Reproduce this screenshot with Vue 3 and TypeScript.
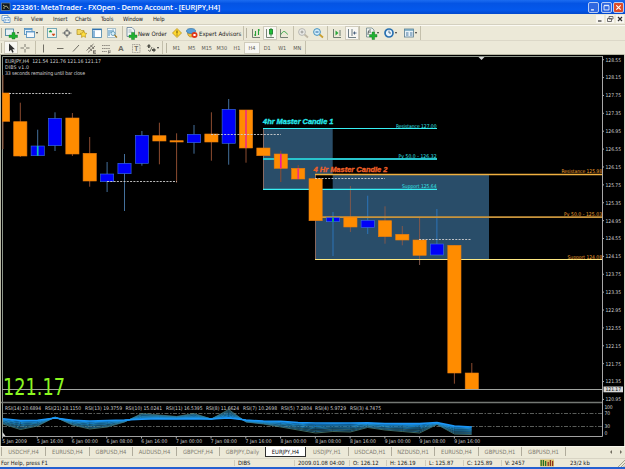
<script setup lang="ts">
interface Tool {
  icon?: string
  w: number
  label?: string
  arrow?: boolean
  on?: boolean
  kind?: 'sep' | 'grip'
}

const menu = [
  { text: 'File', w: 17 },
  { text: 'View', w: 22 },
  { text: 'Insert', w: 22 },
  { text: 'Charts', w: 26 },
  { text: 'Tools', w: 22 },
  { text: 'Window', w: 30 },
  { text: 'Help', w: 20 },
]

const mainTools: Tool[] = [
  { kind: 'grip', w: 4 },
  { icon: 'newchart', w: 19, arrow: true },
  { icon: 'profiles', w: 20, arrow: true },
  { kind: 'sep', w: 2 },
  { icon: 'market', w: 15 },
  { icon: 'navigate', w: 15 },
  { icon: 'folder', w: 15 },
  { icon: 'terminal', w: 15 },
  { icon: 'tester', w: 17 },
  { kind: 'sep', w: 2 },
  { icon: 'order', w: 46, label: 'New Order' },
  { icon: 'warn', w: 15 },
  { icon: 'expert', w: 58, label: 'Expert Advisors' },
  { kind: 'sep', w: 2 },
  { kind: 'grip', w: 4 },
  { icon: 'bars', w: 14 },
  { icon: 'candles', w: 14, on: true },
  { icon: 'line', w: 16 },
  { kind: 'sep', w: 3 },
  { icon: 'zoomin', w: 15 },
  { icon: 'zoomout', w: 16 },
  { kind: 'sep', w: 3 },
  { icon: 'scroll', w: 15 },
  { icon: 'shift', w: 14, on: true },
  { kind: 'sep', w: 5 },
  { icon: 'indicator', w: 18, arrow: true },
  { icon: 'clock', w: 20, arrow: true },
  { icon: 'template', w: 18, arrow: true },
  { kind: 'sep', w: 2 },
]

const lineTools: Tool[] = [
  { kind: 'grip', w: 4 },
  { icon: 'cursor', w: 14, on: true },
  { icon: 'cross', w: 17 },
  { kind: 'sep', w: 2 },
  { icon: 'vline', w: 16 },
  { icon: 'hline', w: 16 },
  { icon: 'trend', w: 15 },
  { icon: 'channel', w: 15 },
  { icon: 'fibo', w: 15 },
  { icon: 'texta', w: 15 },
  { icon: 'textt', w: 15 },
  { icon: 'arrows', w: 18, arrow: true },
  { kind: 'sep', w: 3 },
  { kind: 'grip', w: 4 },
]

const periods = ['M1', 'M5', 'M15', 'M30', 'H1', 'H4', 'D1', 'W1', 'MN']

const tabs = [
  { text: 'USDCHF,H4', w: 44 },
  { text: 'EURUSD,H4', w: 44 },
  { text: 'GBPUSD,H4', w: 43 },
  { text: 'AUDUSD,H4', w: 44 },
  { text: 'GBPCHF,H4', w: 43 },
  { text: 'GBPJPY,Daily', w: 46 },
  { text: 'EURJPY,H4', w: 41, active: true },
  { text: 'USDJPY,H1', w: 42 },
  { text: 'USDCAD,H1', w: 43 },
  { text: 'NZDUSD,H1', w: 43 },
  { text: 'EURUSD,H4', w: 44 },
  { text: 'GBPUSD,H1', w: 43 },
  { text: 'GBPUSD,H1', w: 44 },
]

const status = [
  { text: 'For Help, press F1', w: 234 },
  { text: 'DIBS', w: 60 },
  { text: '2009.01.08 04:00', w: 55 },
  { text: 'O: 126.12', w: 37 },
  { text: 'H: 126.19', w: 39 },
  { text: 'L: 125.87', w: 38 },
  { text: 'C: 125.89', w: 38 },
  { text: 'V: 2457', w: 36 },
]

// [center x, wick top, body top, body bottom, wick bottom, up?, stripe]
type Candle = [number, number, number, number, number, boolean, string?]
const candles: Candle[] = [
  [3, 75, 93, 121.3, 149, false],
  [20.3, 102.7, 121.7, 156, 157, false],
  [37.7, 129.7, 146, 155.7, 155.7, true, '#10c8b0'],
  [55, 112.3, 118.3, 145.7, 151, true],
  [72.4, 113, 118, 154, 156, false],
  [89.7, 137, 153.3, 181, 186.7, false],
  [107.1, 162, 174, 181.7, 192, true],
  [124.5, 154, 163.3, 173.7, 211, true],
  [141.9, 131, 135.3, 163.3, 165.7, true],
  [159.4, 122.7, 135.7, 141, 164.3, false],
  [176.6, 133.3, 140.7, 142, 182.7, false],
  [194, 125, 134.3, 142.7, 153.7, true],
  [211.4, 112.3, 134, 142, 160.7, false],
  [228.7, 99, 109.3, 143.3, 164.7, true],
  [246, 110, 110, 148, 162.7, false, '#f0307c'],
  [263.4, 148, 148, 155.7, 155.7, false],
  [280.8, 150.7, 154, 168.3, 182, false, '#f0189c'],
  [298.2, 165, 168.3, 179, 179, false, '#f0307c'],
  [315.6, 178.7, 178.7, 220.7, 220.7, false],
  [333, 212, 217.7, 221.7, 256, true, '#10c840'],
  [350.4, 186, 217, 227, 232, false],
  [367.7, 195.7, 220.3, 227.5, 234, true],
  [385, 206.3, 220.7, 236.7, 243.7, false],
  [402.3, 226, 234.3, 240, 245.3, false],
  [419.6, 217, 240, 255.3, 265, false],
  [436.9, 209, 244, 255, 255, true],
  [454.4, 245.3, 245.3, 373, 383.7, false],
  [471.8, 363, 373, 389.3, 389.3, false],
]

const prices = Array.from({ length: 20 }, (_, i) => ({
  text: (128.55 - i * 0.4).toFixed(2),
  y: 59.7 + i * 17.88,
}))

const times = [
  '5 Jan 2009', '5 Jan 16:00', '6 Jan 00:00', '6 Jan 08:00', '6 Jan 16:00',
  '7 Jan 00:00', '7 Jan 08:00', '7 Jan 16:00', '8 Jan 00:00', '8 Jan 08:00',
  '8 Jan 16:00', '9 Jan 00:00', '9 Jan 08:00', '9 Jan 16:00',
]

const rsiText = [
  { x: 5, w: 36, text: 'RSI(14) 20.6894' },
  { x: 45, w: 36, text: 'RSI(21) 28.1150' },
  { x: 85, w: 37, text: 'RSI(13) 19.3759' },
  { x: 125.5, w: 36.5, text: 'RSI(10) 15.0241' },
  { x: 166, w: 36.5, text: 'RSI(11) 16.5395' },
  { x: 206, w: 33, text: 'RSI(8) 11.6624' },
  { x: 243, w: 34, text: 'RSI(7) 10.2698' },
  { x: 281, w: 31, text: 'RSI(5) 7.2804' },
  { x: 315, w: 31, text: 'RSI(4) 5.9729' },
  { x: 350, w: 31, text: 'RSI(3) 4.7475' },
]

// slowest and fastest oscillator paths, the others lie between them
const slow = [
  418.5, 420, 420, 418, 420, 420.5, 420, 420, 419.5, 419, 419, 419, 419, 418.5,
  420, 421, 421, 422, 422.5, 422.5, 422.5, 422.5, 423, 423, 423, 422.5, 425.5, 426.5,
]
const fast = [
  424, 429.5, 426, 417, 425, 429, 427, 422, 413.5, 415, 416.5, 413.5, 419, 409.5,
  422, 424, 427, 430, 433, 431.5, 432, 427.5, 430, 431.5, 433, 424.5, 434, 434.5,
]
const shades: [number, string, number][] = [
  [1, '#5c9484', 0.7],
  [0.88, '#206890', 0.9],
  [0.75, '#48a0b8', 0.6],
  [0.62, '#1870a8', 0.9],
  [0.5, '#30a8d8', 0.7],
  [0.38, '#1478c0', 1],
  [0.27, '#28a8e8', 0.8],
  [0.16, '#1480d8', 1.1],
  [0.05, '#1c98f8', 1.5],
]
const rsiLines = shades.map(([k, color, width]) => ({
  color,
  width,
  points: slow
    .map((s, i) => `${(3 + i * 17.36).toFixed(1)},${(s + (fast[i] - s) * k).toFixed(1)}`)
    .join(' '),
}))
</script>

<template>
  <div class="window">
    <svg class="defs" width="0" height="0">
      <defs>
        <g id="i-newchart">
          <rect x="1.5" y="3" width="8" height="6.5" fill="#e8f0f4" stroke="#3c7c9c" stroke-width=".8" />
          <path d="M5 9h3V6.500h3V9h2.500v2.500H11V13H8v-1.500H5z" fill="#20b030" stroke="#107020" stroke-width=".4" />
        </g>
        <g id="i-profiles">
          <rect x="1.500" y="2.500" width="7.500" height="6" fill="#e4f0fa" stroke="#4888b8" stroke-width=".8" />
          <rect x="3.500" y="5.500" width="8" height="6" fill="#f4f8fc" stroke="#4888b8" stroke-width=".8" />
          <path d="M2 3.500h7M4 6h7.500" stroke="#68a0d0" stroke-width="1.200" />
        </g>
        <g id="i-market">
          <rect x="2.500" y="2.500" width="9" height="9" fill="#f0f4ec" stroke="#68a0b0" stroke-width=".9" />
          <path d="M4 6l1.500-2L7 6z" fill="#18a030" stroke="#18a030" stroke-width=".6" />
          <path d="M7 8l1.500 2L10 8z" fill="#d04818" stroke="#d04818" stroke-width=".6" />
        </g>
        <g id="i-navigate" fill="none" stroke="#606468" stroke-width=".9">
          <circle cx="7" cy="7" r="2.600" />
          <path d="M7 2.500v3.500M7 8v3.500M2.500 7H6M8 7h3.500" />
        </g>
        <g id="i-folder">
          <path d="M2 3.500h3.500l1 1H9v4H2z" fill="#f4d860" stroke="#b09020" stroke-width=".7" />
          <path d="M8.500 5l1.100 2.100 2.300.3-1.700 1.600.4 2.400-2.100-1.100-2.100 1.100.4-2.400-1.700-1.600 2.300-.3z" fill="#ffe040" stroke="#b08810" stroke-width=".6" />
        </g>
        <g id="i-terminal">
          <rect x="2.500" y="3" width="9" height="8.500" fill="#fff" stroke="#4080a8" stroke-width=".8" />
          <path d="M2.500 3.500h9" stroke="#3070b0" stroke-width="1.200" />
          <path d="M4 4.500v6.500" stroke="#80b0d8" stroke-width="1.800" />
        </g>
        <g id="i-tester">
          <rect x="2.500" y="2.500" width="8" height="9" fill="#f0f8fc" stroke="#98b4c0" stroke-width=".8" />
          <path d="M4 4v6M6 4v3M8 3.500v2" stroke="#4088b8" />
          <circle cx="8" cy="7.500" r="2" fill="#d8f0fa" stroke="#5090b0" stroke-width=".8" />
          <path d="M9.500 9l2.500 2.500" stroke="#a07820" stroke-width="1.100" />
        </g>
        <g id="i-order">
          <path d="M3 1.500h5l2.500 2.500v6.500H3z" fill="#f4f8f4" stroke="#507090" stroke-width=".7" />
          <path d="M4.500 4h3M4.500 6h4" stroke="#8098a8" stroke-width=".7" />
          <path d="M5 9h2.500V6.500h3V9H13v2.500h-2.500V13.500h-3v-2H5z" fill="#20b030" stroke="#107020" stroke-width=".4" />
        </g>
        <g id="i-warn">
          <path d="M7 2.500L11.500 7 7 11.500 2.500 7z" fill="#ffd830" stroke="#b89020" stroke-width=".8" />
          <path d="M7 4.500v3M7 8.500v1" stroke="#604800" />
        </g>
        <g id="i-expert">
          <path d="M2.500 6.500c0 6 7 6 7 0z" fill="#f0c040" stroke="#a07818" stroke-width=".6" />
          <ellipse cx="6" cy="5" rx="4.500" ry="2.500" fill="#58a0d8" stroke="#2868a0" stroke-width=".6" />
          <circle cx="9.500" cy="9" r="3" fill="#e03818" />
          <rect x="8.400" y="8" width="2.200" height="2" fill="#fff" />
        </g>
        <g id="i-bars" fill="none" stroke="#687468" stroke-width=".9">
          <path d="M3.500 3v8.500H11" />
          <path d="M6.500 5v5M5 9h1.500M9.500 3v6M9.500 4H11" stroke="#28a038" stroke-width="1.100" />
        </g>
        <g id="i-candles" fill="none" stroke="#687468" stroke-width=".9">
          <path d="M3.500 3v8.500H11" />
          <path d="M8 2v8.500" stroke="#208030" />
          <rect x="6.500" y="3.500" width="3" height="4.500" fill="#20c038" stroke="#208030" />
        </g>
        <g id="i-line" fill="none" stroke="#687468" stroke-width=".9">
          <path d="M3.500 3v8.500H11" />
          <path d="M4 8.500c2-4 4-4 6.500 0" stroke="#28a038" />
        </g>
        <g id="i-zoomin">
          <path d="M8.500 8.500l3.500 3" stroke="#c0b8a4" stroke-width="1.800" />
          <circle cx="6" cy="6" r="3.400" fill="#ecece8" stroke="#b0b0ac" stroke-width=".9" />
          <path d="M4.500 6h3M6 4.500v3" stroke="#989894" />
        </g>
        <g id="i-zoomout">
          <path d="M8.500 8.500l3.500 3" stroke="#c8a030" stroke-width="1.800" />
          <circle cx="6" cy="6" r="3.400" fill="#d0ecfa" stroke="#3888b8" stroke-width=".9" />
          <path d="M4.500 6h3" stroke="#2060a0" />
        </g>
        <g id="i-scroll" fill="none" stroke="#607064" stroke-width=".9">
          <path d="M3.500 3v8.500H11M10 4v6" />
          <path d="M5.500 4.500v5l3-2.500z" fill="#28a838" stroke="none" />
        </g>
        <g id="i-shift" fill="none" stroke="#607078" stroke-width=".9">
          <path d="M3.500 3v8.500H11M7 3v7" />
          <path d="M8 7h3.500M9.500 5.500v3" stroke="#405878" />
        </g>
        <g id="i-indicator">
          <path d="M2.500 2h5.500l2 2v7H2.500z" fill="#f0f4f0" stroke="#607880" stroke-width=".7" />
          <path d="M4 9c0-6 2-5 3-5M4 6h3" fill="none" stroke="#404848" stroke-width=".8" />
          <path d="M5.500 8.500H8V6h2.600v2.500H13V11h-2.400v2.500H8V11H5.500z" fill="#20b030" stroke="#107020" stroke-width=".4" />
        </g>
        <g id="i-clock">
          <circle cx="7" cy="7" r="4" fill="#e8f4fc" stroke="#2870b0" stroke-width="1.700" />
          <path d="M7 4.500V7h2" fill="none" stroke="#305070" stroke-width=".8" />
        </g>
        <g id="i-template">
          <rect x="2.500" y="3" width="9" height="8" fill="#e8f2f8" stroke="#587c90" stroke-width=".8" />
          <path d="M2.500 4h9" stroke="#5090b0" stroke-width="1.200" />
          <path d="M4 7h2.500M4 9h2.500M8 7h2.500M8 9h2.500" stroke="#4878a0" />
        </g>
        <g id="i-cursor">
          <path d="M5 2.500v8l2-1.800 1.300 3 1.400-.7-1.300-2.800H11z" fill="#303030" />
        </g>
        <g id="i-cross" stroke="#706e64" stroke-width=".9">
          <path d="M7 3v3M7 8v3.500M2.500 7H6M8 7h3.500" />
        </g>
        <g id="i-vline"><path d="M6.500 3.500v8" stroke="#706e64" /></g>
        <g id="i-hline"><path d="M4 7.500h6.500" stroke="#706e64" /></g>
        <g id="i-trend"><path d="M4 10.500l6-6.500" stroke="#706e64" /></g>
        <g id="i-channel" fill="none" stroke="#605c54" stroke-width=".8">
          <path d="M2.500 9.500l7-6.500M4 11.500l7-6.500M4.500 6l3.500 4M6.500 4l3.500 4M9.500 9.500v3M9.500 9.800H12M9.500 11h2M9.500 12.300H12" />
        </g>
        <g id="i-fibo" fill="none" stroke="#807c74" stroke-width=".9">
          <path d="M3 4.500h8M3 7.500h8M3 10.500h5" stroke-dasharray="1.500 .6" />
          <path d="M9.500 9.500v3M9.500 10h2.500M9.500 11.500h2" />
        </g>
        <g id="i-texta"><text x="7" y="10.300" class="glyph">A</text></g>
        <g id="i-textt">
          <rect x="3.500" y="3.500" width="7.500" height="8" fill="none" stroke="#908c84" stroke-dasharray="1 .6" stroke-width=".8" />
          <text x="7.300" y="10" class="glyph small">T</text>
        </g>
        <g id="i-arrows" fill="#505048">
          <path d="M2.500 5.500L5 3l2 2.500H5.700V7H4V5.500zM8 8h1.500V6.500L12 9l-2.500 2.500V10H8z" />
          <path d="M4 9l2 1.500L8 6" fill="none" stroke="#505048" stroke-width=".8" />
        </g>
      </defs>
    </svg>

    <header class="title">
      <svg class="app-icon" viewBox="0 0 10 10">
        <rect x=".5" y="1" width="8.500" height="7.500" fill="#101820" stroke="#8098a0" stroke-width=".6" />
        <path d="M2 3l2 1.500L5.500 4 7.500 6.500M2 6h2" fill="none" stroke="#d8d8a0" stroke-width=".8" />
      </svg>
      <span class="title-text">223361: MetaTrader - FXOpen - Demo Account - [EURJPY,H4]</span>
      <div class="win-buttons">
        <svg viewBox="0 0 11 11"><path d="M2.500 8.500h3.500" stroke="#fff" stroke-width="1.600" /></svg>
        <svg viewBox="0 0 11 11"><path d="M2.500 3.300h6v5.200h-6zM2.500 2.800h6" fill="none" stroke="#fff" stroke-width="1" /></svg>
        <svg class="close" viewBox="0 0 11 11"><path d="M2.800 2.800l5.400 5.400M8.200 2.800L2.800 8.200" stroke="#fff" stroke-width="1.400" /></svg>
      </div>
    </header>

    <nav class="menu">
      <svg class="menu-icon" viewBox="0 0 10 10">
        <path d="M1 1.500h6v5H1z" fill="#fff" stroke="#5890c8" stroke-width=".8" />
        <path d="M3 3.500h6v5H3z" fill="#f0f8ff" stroke="#5890c8" stroke-width=".8" />
        <path d="M4.500 5v2.500M6 4.500V7M7.500 5v2" stroke="#6090b0" stroke-width=".6" />
      </svg>
      <span v-for="m in menu" :key="m.text" class="menu-item" :style="{ width: m.w + 'px' }">{{ m.text }}</span>
      <div class="mdi">
        <svg viewBox="0 0 8 8"><path d="M2 6h3.500" stroke="#303030" stroke-width="1.200" /></svg>
        <svg viewBox="0 0 8 8"><path d="M3 1.500h4V4H3zM1.500 3.500h4v3h-4z" fill="none" stroke="#505050" stroke-width=".8" /></svg>
        <svg viewBox="0 0 8 8"><path d="M2 2l4 4M6 2L2 6" stroke="#303030" stroke-width="1.200" /></svg>
      </div>
    </nav>

    <div class="toolbar main">
      <div
        v-for="(t, i) in mainTools"
        :key="i"
        class="tool"
        :class="[t.kind, { on: t.on }]"
        :style="{ width: t.w + 'px' }"
      >
        <svg v-if="t.icon" class="icon" viewBox="0 0 14 14"><use :href="'#i-' + t.icon" /></svg>
        <span v-if="t.label" class="tool-label">{{ t.label }}</span>
        <i v-if="t.arrow" class="drop"></i>
      </div>
    </div>

    <div class="toolbar lines">
      <div
        v-for="(t, i) in lineTools"
        :key="i"
        class="tool"
        :class="[t.kind, { on: t.on }]"
        :style="{ width: t.w + 'px' }"
      >
        <svg v-if="t.icon" class="icon" viewBox="0 0 14 14"><use :href="'#i-' + t.icon" /></svg>
        <i v-if="t.arrow" class="drop"></i>
      </div>
      <span v-for="p in periods" :key="p" class="period" :class="{ on: p === 'H4' }">{{ p }}</span>
      <div class="tool sep"></div>
    </div>

    <svg class="chart" viewBox="0 54 625 392">
      <rect x="0" y="54" width="625" height="392" fill="#000" />
      <path d="M0 54.500H625M.5 54V446" stroke="#b8b8a4" />
      <path d="M624.500 54V446" stroke="#d8d4c4" />
      <path d="M2.500 436V56.500H602.500" fill="none" stroke="#8c9488" />
      <path d="M602.500 56V436.500" stroke="#a8a8a8" />
      <path d="M478.500 57h6l-3 3z" fill="#d8d8d8" />

      <path
        fill="#294d69"
        fill-rule="evenodd"
        d="M263.300 128.500H332.700V189.500H263.300ZM315.500 174H489V259.500H315.500Z"
      />
      <path d="M263.500 128V190M315.500 174V260" stroke="#a87868" stroke-width=".8" />

      <g v-for="(c, i) in candles" :key="i">
        <path
          :d="`M${c[0]} ${c[1]}V${c[4]}`"
          :stroke="c[5] ? (i > 18 ? '#2c74b8' : '#44709c') : i > 18 && i < 25 ? '#80584c' : '#8c4c30'"
          stroke-width="1"
        />
      </g>

      <g stroke="#38f0f4">
        <path d="M263 128.500H437M263 189.300H437" stroke-width="1.200" />
        <path d="M263 159H437" stroke-width="2" stroke="#28c4cc" />
      </g>
      <g stroke="#f0b040">
        <path d="M315 174.500H602" stroke-width="1.300" />
        <path d="M315 217.200H602" stroke-width="1.800" stroke="#c8943c" />
        <path d="M315 259.500H602" stroke-width="1.200" stroke="#fce884" />
      </g>

      <g v-for="(c, i) in candles" :key="'b' + i">
        <rect
          :x="i ? c[0] - 6.6 : 2.5"
          :y="c[2]"
          :width="i ? 13.2 : 7.2"
          :height="c[3] - c[2]"
          :fill="c[5] ? '#0000f8' : '#ff8c00'"
          :stroke="c[5] ? '#3c74e0' : '#e87c10'"
          stroke-width=".6"
        />
        <path v-if="c[6]" :d="`M${c[0]} ${c[2]}V${c[3]}`" :stroke="c[6]" stroke-width="1.700" />
      </g>

      <g stroke="#d0d0d0" stroke-dasharray="2 1.300" stroke-width=".9">
        <path d="M9 93.500H72M107 181.500H177M211 134.500H281M315 178.500H385M419 239.500H471" />
      </g>

      <path d="M2 389.500H602" stroke="#a0a4a0" />
      <path d="M1 402.500H602" stroke="#747874" stroke-width="1.600" />
      <g stroke="#707470" stroke-width=".8" stroke-dasharray="4 1.500 1.500 1.500">
        <path d="M3 413.500H602M3 426.500H602" />
      </g>
      <polyline
        v-for="(l, i) in rsiLines"
        :key="'r' + i"
        :points="l.points"
        fill="none"
        :stroke="l.color"
        :stroke-width="l.width"
      />
      <path d="M2 436.500H602.500" stroke="#a0a0a0" />
      <path d="M2.500 432l3 4h-3z" fill="#d8d8d8" />

      <g class="tiny" fill="#d0d0d0">
        <text x="5" y="63" textLength="96" class="head">EURJPY,H4&#160; 121.54 121.76 121.16 121.17</text>
        <text x="5" y="69" textLength="24" class="head">DIBS v1.0</text>
        <text x="5" y="75.200" textLength="80" class="head">33 seconds remaining until bar close</text>
        <g v-for="p in prices" :key="p.text">
          <path :d="`M602 ${p.y}h2`" stroke="#a8a8a8" />
          <text x="605.500" :y="p.y + 1.900" textLength="15.500">{{ p.text }}</text>
        </g>
        <g v-for="(t, i) in times" :key="t">
          <path :d="`M${2.500 + i * 34.76} 436v2.500`" stroke="#a8a8a8" />
          <text :x="2.3 + i * 34.76" y="443" :textLength="i ? 26 : 24.5">{{ t }}</text>
        </g>
        <text v-for="r in rsiText" :key="r.text" :x="r.x" y="410.400" :textLength="r.w">{{ r.text }}</text>
        <text x="604.500" y="409" textLength="8">100</text>
        <text x="604.500" y="415.400" textLength="5.500">70</text>
        <text x="604.500" y="428.400" textLength="5.500">30</text>
        <text x="604.500" y="434.600" textLength="3">0</text>
      </g>
      <rect x="603.500" y="386.500" width="19.500" height="5.800" fill="#d8d8d8" />
      <text x="605.500" y="391.400" textLength="15.500" class="tiny" fill="#101010">121.17</text>

      <g class="tiny" fill="#34e4e8">
        <text x="396" y="127.500" textLength="40.500">Resistance 127.00</text>
        <text x="398.500" y="157.800" textLength="38">Pv 50.0 - 126.32</text>
        <text x="402" y="188.300" textLength="34.500">Support 125.64</text>
      </g>
      <g class="tiny" fill="#f0a030">
        <text x="561.500" y="173.300" textLength="40.500">Resistance 125.98</text>
        <text x="564" y="216.200" textLength="38">Pv 50.0 - 125.03</text>
        <text x="567.500" y="258.500" textLength="34.500">Support 124.08</text>
      </g>
      <text x="263" y="124.300" textLength="70.500" lengthAdjust="spacingAndGlyphs" class="note" fill="#28e8ec" stroke="#28e8ec">4hr Master Candle 1</text>
      <text x="313.500" y="172.300" textLength="74" lengthAdjust="spacingAndGlyphs" class="note" fill="#f06028" stroke="#f06028">4 Hr Master Candle 2</text>
      <text x="3" y="394.700" textLength="62" lengthAdjust="spacingAndGlyphs" class="big">121.17</text>
    </svg>

    <div class="tabs">
      <span
        v-for="(t, i) in tabs"
        :key="i"
        class="tab"
        :class="{ active: t.active }"
        :style="{ width: t.w + 'px' }"
      >{{ t.text }}</span>
      <span class="tab-end"></span>
      <svg class="tab-nav" viewBox="0 0 16 8">
        <path d="M3 2v4L1 4zM11 2v4l2-2z" fill="#706c60" />
      </svg>
    </div>

    <footer class="status">
      <span v-for="s in status" :key="s.text" class="cell" :style="{ width: s.w + 'px' }">{{ s.text }}</span>
      <svg class="signal" viewBox="0 0 14 8">
        <rect y=".5" width="14" height="7" fill="#d8c068" />
        <path d="M1.200 1v6M3.400 1v6M5.600 2v5" stroke="#207028" stroke-width="1.200" />
        <path d="M8.200 3v4M10.400 1v6M12.600 2v5" stroke="#903020" stroke-width="1.200" />
      </svg>
      <span class="traffic">23/2 kb</span>
      <svg class="corner" viewBox="0 0 8 8">
        <path d="M1 8l7-7M4 8l4-4M6.500 8L8 6.500" stroke="#a8a490" />
      </svg>
    </footer>
    <div class="taskbar"></div>
  </div>
</template>

<style>
body {
  background: #ece9d8;
  overflow: hidden;
}
</style>

<style scoped>
.window {
  width: 625px;
  height: 469px;
  display: flex;
  flex-direction: column;
  overflow: hidden;
  background: #ece9d8;
  font-family: "DejaVu Sans Condensed", "DejaVu Sans", sans-serif;
  font-size: 5.8px;
  color: #181818;
  white-space: nowrap;
}
.defs {
  position: absolute;
}
.title {
  height: 14px;
  flex: none;
  display: flex;
  align-items: center;
  padding: 0 1px 0 1px;
  background: linear-gradient(#1c6cf0, #0454e4 25%, #0458ec 70%, #0248cc);
  color: #fff;
}
.app-icon {
  width: 10px;
  height: 10px;
  margin-right: 1px;
}
.title-text {
  font-family: "Open Sans", sans-serif;
  font-size: 7.5px;
  font-weight: 600;
  letter-spacing: -0.13px;
}
.win-buttons {
  margin-left: auto;
  display: flex;
  gap: 1.5px;
}
.win-buttons svg {
  width: 11px;
  height: 11px;
  box-sizing: border-box;
  border: 1px solid #b8ccf4;
  border-radius: 2px;
  background: #3068e0;
}
.win-buttons .close {
  background: #dc4c28;
}
.menu {
  height: 11px;
  flex: none;
  display: flex;
  align-items: center;
  border-bottom: 1px solid #d4d0c0;
  box-sizing: border-box;
}
.menu-icon {
  width: 10px;
  height: 10px;
  margin: 0 3px 0 1px;
}
.menu-item {
  flex: none;
  letter-spacing: -0.1px;
}
.mdi {
  margin-left: auto;
  display: flex;
  gap: 2px;
  padding-right: 1px;
}
.mdi svg {
  width: 8px;
  height: 8px;
  background: #f8f6f0;
}
.toolbar {
  flex: none;
  display: flex;
  align-items: center;
}
.main {
  height: 16px;
  border-top: 1px solid #fbfaf4;
  border-bottom: 1px solid #dcd8c8;
  box-sizing: border-box;
}
.lines {
  height: 13px;
}
.tool {
  flex: none;
  height: 14px;
  display: flex;
  align-items: center;
  box-sizing: border-box;
}
.lines .tool {
  height: 13px;
}
.icon {
  flex: none;
  width: 14px;
  height: 14px;
}
.on {
  background: #f8f7f2;
  box-shadow: inset 0 0 0 1px #d0ccbc;
}
.sep {
  width: 2px;
  border-left: 1px solid #c4c0ac;
}
.grip::before {
  content: '';
  width: 1px;
  height: 10px;
  margin-left: 1px;
  background: #b8b4a0;
}
.tool-label {
  font-size: 6px;
}
.drop {
  flex: none;
  border: 1.5px solid transparent;
  border-top: 2px solid #303030;
  border-bottom: 0;
  margin-left: -1px;
}
.glyph {
  font: bold 8px "Liberation Sans", sans-serif;
  fill: #706e64;
  text-anchor: middle;
}
.glyph.small {
  font-size: 6.5px;
}
.period {
  flex: none;
  width: 15.1px;
  height: 12px;
  line-height: 12px;
  text-align: center;
  font-size: 5.5px;
  color: #585850;
}
.chart {
  flex: none;
  width: 625px;
  height: 392px;
  display: block;
}
.tiny {
  font-family: "DejaVu Sans Condensed", sans-serif;
  font-size: 5px;
}
.head {
  font-size: 5.2px;
}
.note {
  font: italic bold 7px "Liberation Sans", sans-serif;
  stroke-width: 0.3;
}
.big {
  font: 22.5px "DejaVu Sans", sans-serif;
  fill: #8cf820;
}
.tabs {
  height: 12px;
  flex: none;
  display: flex;
  align-items: flex-start;
  padding-left: 1px;
  box-sizing: border-box;
  border-top: 1px solid #f8f6ec;
}
.tab {
  flex: none;
  box-sizing: border-box;
  height: 9px;
  line-height: 10px;
  text-align: center;
  border-left: 1px solid #b0ac9c;
  color: #807c70;
}
.tab.active {
  height: 10px;
  background: #fff;
  color: #101010;
  border: 1px solid #303030;
  border-top: 0;
}
.tab.active + .tab {
  border-left: 0;
}
.tab-end {
  width: 1px;
  height: 9px;
  background: #b0ac9c;
}
.tab-nav {
  width: 16px;
  height: 8px;
  margin: 1px 0 0 auto;
}
.status {
  flex: 1;
  display: flex;
  align-items: center;
  border-top: 1px solid #d8d4c4;
}
.cell {
  flex: none;
  box-sizing: border-box;
  padding-left: 3px;
  border-left: 1px solid #d0ccbc;
}
.cell:first-child {
  border: 0;
  padding-left: 1px;
}
.signal {
  width: 14px;
  height: 8px;
  margin-left: 3px;
}
.signal + .traffic {
  margin-left: 16px;
}
.corner {
  width: 8px;
  height: 8px;
  margin-left: auto;
}
.taskbar {
  height: 2px;
  flex: none;
  background: #2460d0;
}
</style>
